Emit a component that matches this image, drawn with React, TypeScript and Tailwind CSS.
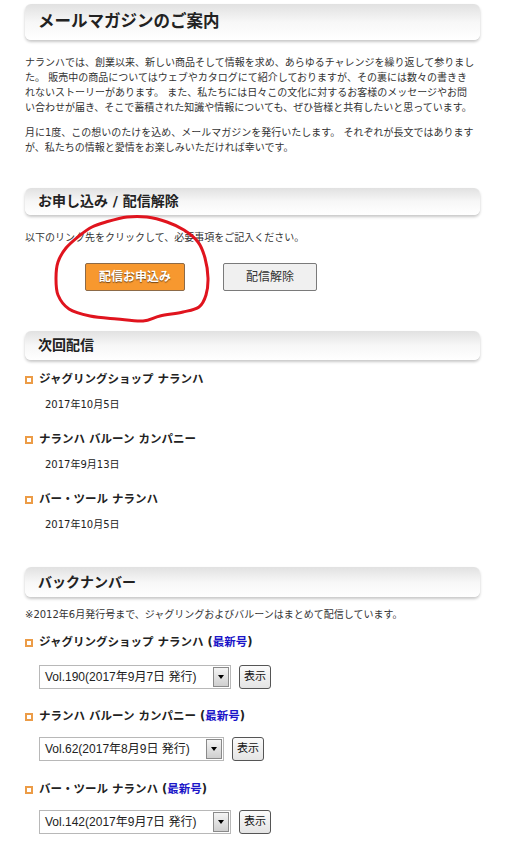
import React from 'react';

const FONT = '"DejaVu Sans", "Noto Sans CJK JP", sans-serif';
const SELECT_FONT = '"Liberation Sans", "Noto Sans CJK JP", sans-serif';

const Bar = ({ title, h, size }: { title: string; h: string; size: string }) => (
  <div
    className={`${h} w-[455px] rounded-[6px] bg-linear-to-b from-[#e1e1e1] via-[#f7f7f7] to-white shadow-[0_2px_3px_rgba(0,0,0,0.22)] flex items-center pl-[13px]`}
  >
    <h2 className={`${size} font-bold text-[#222]`}>{title}</h2>
  </div>
);

const Bullet = () => <span className="inline-block w-[8px] h-[8px] border-2 border-[#ec9c47] bg-white mr-[6px]" />;

const ItemTitle = ({ name, latest }: { name: string; latest?: boolean }) => (
  <div className="flex items-center h-[16px] text-[11.5px] font-bold text-[#222]">
    <Bullet />
    <span>
      {name}
      {latest && (
        <>
          {' '}(<a className="text-[#1a14c8]">最新号</a>)
        </>
      )}
    </span>
  </div>
);

const VolSelect = ({ label, width }: { label: string; width: string }) => (
  <div className="flex items-center ml-[14px]">
    <div className={`${width} h-[24px] border border-[#b8b8b8] bg-white flex p-[1px]`}>
      <span className="flex-1 flex items-center pl-[4px] text-[12px] text-[#222]" style={{ fontFamily: SELECT_FONT }}>
        {label}
      </span>
      <span className="w-[16px] border border-[#8a8a8a] bg-linear-to-b from-[#f4f4f4] to-[#cfcfcf] flex items-center justify-center">
        <span className="w-0 h-0 border-x-[3.5px] border-t-[4px] border-x-transparent border-t-black" />
      </span>
    </div>
    <button className="ml-[8px] h-[24px] w-[32px] border border-[#555] rounded-[3px] bg-linear-to-b from-[#fbfbfb] to-[#e4e4e4] text-[11px] text-[#111]">
      表示
    </button>
  </div>
);

const nextIssues = [
  { name: 'ジャグリングショップ ナランハ', date: '2017年10月5日' },
  { name: 'ナランハ バルーン カンパニー', date: '2017年9月13日' },
  { name: 'バー・ツール ナランハ', date: '2017年10月5日' },
];

// hand drawn red loop around the subscribe button
const loop: [number, number][] = [
  [106, 222], [127, 217], [147, 217], [167, 222], [184, 230], [198, 242], [205, 258],
  [208, 278], [206, 295], [199, 307], [183, 312], [160, 316], [143, 321], [117, 319],
  [90, 316], [69, 309], [58, 295], [56, 278], [58, 262], [66, 248], [79, 236], [92, 227],
];

const smoothPath = (pts: [number, number][]) => {
  const n = pts.length;
  let d = `M${pts[0][0]},${pts[0][1]}`;
  for (let i = 0; i < n; i++) {
    const p0 = pts[(i - 1 + n) % n];
    const p1 = pts[i];
    const p2 = pts[(i + 1) % n];
    const p3 = pts[(i + 2) % n];
    const c1x = p1[0] + (p2[0] - p0[0]) / 6;
    const c1y = p1[1] + (p2[1] - p0[1]) / 6;
    const c2x = p2[0] - (p3[0] - p1[0]) / 6;
    const c2y = p2[1] - (p3[1] - p1[1]) / 6;
    d += ` C${c1x},${c1y} ${c2x},${c2y} ${p2[0]},${p2[1]}`;
  }
  return d;
};

export default function App() {
  return (
    <div className="relative w-[516px] min-h-[861px] bg-white text-[#333]" style={{ fontFamily: FONT }}>
      <div className="pl-[25px] pt-[4px] pb-[20px]">
        <Bar title="メールマガジンのご案内" h="h-[36px]" size="text-[16.5px]" />

        <p className="mt-[15px] w-[451px] text-[10px] leading-[15px]">
          ナランハでは、創業以来、新しい商品そして情報を求め、あらゆるチャレンジを繰り返して参りました。 販売中の商品についてはウェブやカタログにて紹介しておりますが、その裏には数々の書ききれないストーリーがあります。 また、私たちには日々この文化に対するお客様のメッセージやお問い合わせが届き、そこで蓄積された知識や情報についても、ぜひ皆様と共有したいと思っています。
        </p>
        <p className="mt-[10px] w-[451px] text-[10px] leading-[15px]">
          月に1度、この想いのたけを込め、メールマガジンを発行いたします。 それぞれが長文ではありますが、私たちの情報と愛情をお楽しみいただければ幸いです。
        </p>

        {/* 申し込み */}
        <div className="mt-[33px]">
          <Bar title="お申し込み / 配信解除" h="h-[27px]" size="text-[14px]" />
        </div>
        <p className="mt-[15px] text-[10px] leading-[15px]">以下のリンク先をクリックして、必要事項をご記入ください。</p>
        <div className="mt-[18px] pl-[60px] flex gap-[38px]">
          <button className="w-[100px] h-[28px] bg-[#f7982f] border border-[#8c6a48] rounded-[2px] text-white text-[12px] font-bold [text-shadow:0_1px_1px_rgba(0,0,0,0.55)]">
            配信お申込み
          </button>
          <button className="w-[94px] h-[28px] bg-[#f0f0f0] border border-[#7a7a7a] rounded-[2px] text-[#333] text-[12px]">
            配信解除
          </button>
        </div>

        {/* 次回配信 */}
        <div className="mt-[40px]">
          <Bar title="次回配信" h="h-[29px]" size="text-[14px]" />
        </div>
        <div className="mt-[12px] flex flex-col gap-[19px]">
          {nextIssues.map((it) => (
            <div key={it.name + it.date}>
              <ItemTitle name={it.name} />
              <div className="mt-[9px] pl-[20px] h-[16px] leading-[16px] text-[10px] text-[#222]">{it.date}</div>
            </div>
          ))}
        </div>

        {/* バックナンバー */}
        <div className="mt-[34px]">
          <Bar title="バックナンバー" h="h-[30px]" size="text-[14px]" />
        </div>
        <p className="mt-[10px] text-[10px] leading-[16px]">
          ※2012年6月発行号まで、ジャグリングおよびバルーンはまとめて配信しています。
        </p>

        <div className="mt-[12px]">
          <ItemTitle name="ジャグリングショップ ナランハ" latest />
        </div>
        <div className="mt-[14px]">
          <VolSelect label="Vol.190(2017年9月7日 発行)" width="w-[192px]" />
        </div>

        <div className="mt-[20px]">
          <ItemTitle name="ナランハ バルーン カンパニー" latest />
        </div>
        <div className="mt-[12px]">
          <VolSelect label="Vol.62(2017年8月9日 発行)" width="w-[185px]" />
        </div>

        <div className="mt-[21px]">
          <ItemTitle name="バー・ツール ナランハ" latest />
        </div>
        <div className="mt-[12px]">
          <VolSelect label="Vol.142(2017年9月7日 発行)" width="w-[192px]" />
        </div>
      </div>

      <svg className="absolute left-0 top-0 pointer-events-none" width="516" height="861">
        <path d={smoothPath(loop)} fill="none" stroke="#e0141e" strokeWidth="3" strokeLinejoin="round" />
      </svg>
    </div>
  );
}
